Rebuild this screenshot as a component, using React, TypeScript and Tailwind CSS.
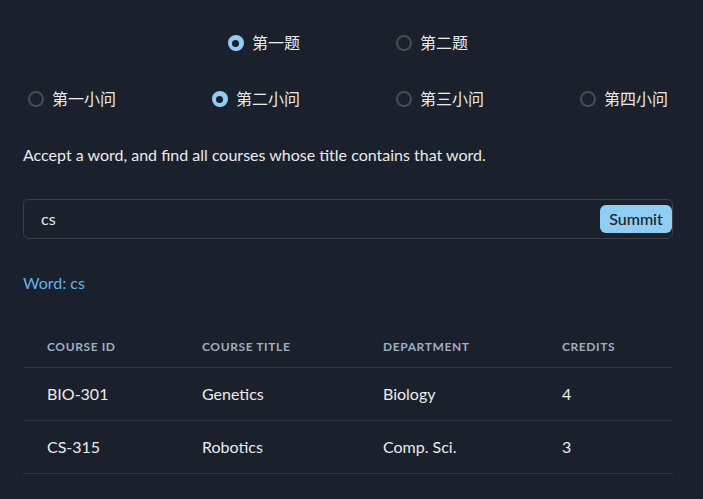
import { useState } from "react";

const FONT = '"Segoe UI", Lato, "Noto Sans CJK SC", sans-serif';

const courses = [
  { id: "BIO-301", title: "Genetics", dept: "Biology", credits: 4 },
  { id: "CS-315", title: "Robotics", dept: "Comp. Sci.", credits: 3 },
];

function Radio({ checked, label, onClick }: { checked: boolean; label: string; onClick: () => void }) {
  return (
    <label className="flex items-center gap-2 cursor-pointer" onClick={onClick}>
      {checked ? (
        <span className="flex h-4 w-4 items-center justify-center rounded-full bg-[#90cdf4]">
          <span className="h-[7px] w-[7px] rounded-full bg-[#1a202c]" />
        </span>
      ) : (
        <span className="h-4 w-4 rounded-full border-2 border-[#474c55]" />
      )}
      <span className="text-base leading-6 text-[#ebebec]">{label}</span>
    </label>
  );
}

export default function App() {
  const [ti, setTi] = useState(0);
  const [xiao, setXiao] = useState(1);
  const [word, setWord] = useState("cs");

  return (
    <div className="min-h-[499px] w-full bg-[#1a202c]" style={{ fontFamily: FONT }}>
      <div className="flex flex-col gap-8 pl-[23px] pr-[30px] pt-[31px] pb-6">
        {/* 题目选择 */}
        <div className="flex justify-center gap-24">
          {["第一题", "第二题"].map((t, i) => (
            <Radio key={t} label={t} checked={ti === i} onClick={() => setTi(i)} />
          ))}
        </div>
        <div className="flex justify-center gap-24">
          {["第一小问", "第二小问", "第三小问", "第四小问"].map((t, i) => (
            <Radio key={t} label={t} checked={xiao === i} onClick={() => setXiao(i)} />
          ))}
        </div>

        <p className="text-base leading-6 text-[#ebebec]">
          Accept a word, and find all courses whose title contains that word.
        </p>

        {/* 输入 */}
        <div className="flex h-10 items-center rounded-md border border-[#3b414b] pl-[17px]">
          <input
            value={word}
            onChange={(e) => setWord(e.target.value)}
            className="flex-1 bg-transparent text-base text-[#ebebec] outline-none"
            style={{ fontFamily: FONT }}
          />
          <button className="h-7 w-[72px] rounded-md bg-[#90cdf4] text-base font-medium text-[#1a202c]">
            Summit
          </button>
        </div>

        <p className="text-base leading-6 text-[#63b3ed]">Word: cs</p>

        {/* 结果 */}
        <table className="w-full table-fixed border-collapse">
          <colgroup>
            <col className="w-[155px]" />
            <col className="w-[181px]" />
            <col className="w-[179px]" />
            <col />
          </colgroup>
          <thead>
            <tr className="border-b border-[#2d3748]">
              {["Course ID", "Course Title", "Department", "Credits"].map((h) => (
                <th
                  key={h}
                  className="px-6 py-3 text-left text-xs font-bold uppercase leading-4 tracking-wider text-[#a0aec0]"
                >
                  {h}
                </th>
              ))}
            </tr>
          </thead>
          <tbody>
            {courses.map((c) => (
              <tr key={c.id} className="border-b border-[#2d3748]">
                <td className="px-6 py-4 text-base leading-5 text-[#ebebec]">{c.id}</td>
                <td className="px-6 py-4 text-base leading-5 text-[#ebebec]">{c.title}</td>
                <td className="px-6 py-4 text-base leading-5 text-[#ebebec]">{c.dept}</td>
                <td className="px-6 py-4 text-base leading-5 text-[#ebebec]">{c.credits}</td>
              </tr>
            ))}
          </tbody>
        </table>
      </div>
    </div>
  );
}
